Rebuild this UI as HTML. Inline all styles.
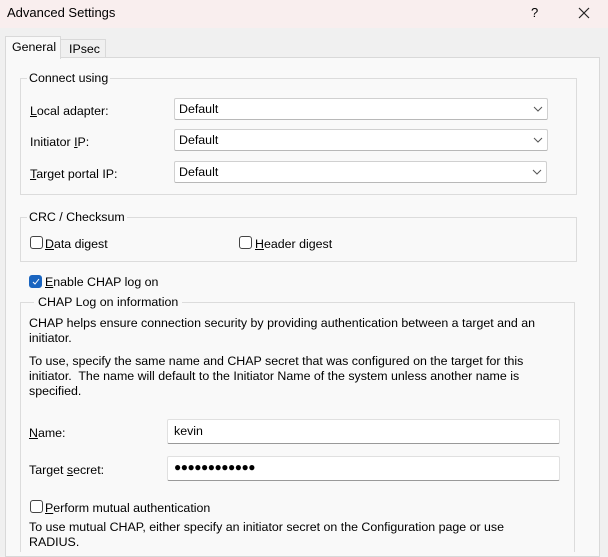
<!DOCTYPE html>
<html style="overflow:hidden;width:608px;height:557px"><head><style>
*{margin:0;padding:0;box-sizing:border-box}
body{width:608px;height:557px;background:#f0f0f0;font-family:"Liberation Sans",sans-serif;font-size:12.4px;color:#000;position:relative;overflow:hidden}
.a{position:absolute;white-space:nowrap}
.title{left:0;top:0;width:608px;height:28px;background:#f9eeee}
.grp{position:absolute;border:1px solid #dcdcdc}
.lg{position:absolute;background:#f9f9f9;padding:0 2px}
.combo{position:absolute;left:174px;width:374px;height:22px;background:#fff;border:1px solid #d0d0d0;border-bottom-color:#b8b8b8;border-radius:2px;padding:3px 0 0 4px}
.combo svg{position:absolute;right:4px;top:7px}
.cb{position:absolute;width:13px;height:13px;border:1px solid #444;border-radius:3px;background:#fff}
.inp{position:absolute;left:167px;width:393px;height:25px;background:#fff;border:1px solid #e0e0e0;border-bottom-color:#999;border-radius:2px;padding:4px 0 0 6px}
u{text-decoration:underline}
</style></head><body>
<div class="a title"></div>
<div class="a" style="left:7px;top:5px;font-size:13px">Advanced Settings</div>
<div class="a" style="left:531px;top:5px;font-size:13px">?</div>
<svg class="a" style="left:578px;top:7px" width="12" height="12"><path d="M1 1L11 11M11 1L1 11" stroke="#222" stroke-width="1.2"/></svg>
<div class="a" style="left:5px;top:57px;width:595px;height:500px;background:#f9f9f9;border:1px solid #d9d9d9"></div>
<div class="a" style="left:5px;top:36px;width:56px;height:23px;background:#f9f9f9;border:1px solid #d9d9d9;border-bottom:none"></div>
<div class="a" style="left:12px;top:40px">General</div>
<div class="a" style="left:61px;top:39px;width:45px;height:18px;background:#f0f0f0;border:1px solid #d9d9d9;border-left:none;border-bottom:none"></div>
<div class="a" style="left:69px;top:42px">IPsec</div>

<div class="grp" style="left:20px;top:78px;width:557px;height:117px"></div>
<div class="lg" style="left:27px;top:71px">Connect using</div>
<div class="a" style="left:30px;top:104px"><u>L</u>ocal adapter:</div>
<div class="a" style="left:30px;top:135px">Initiator <u>I</u>P:</div>
<div class="a" style="left:30px;top:167px"><u>T</u>arget portal IP:</div>
<div class="combo" style="top:98px">Default<svg width="10" height="6"><path d="M1 1L5 5L9 1" fill="none" stroke="#555"/></svg></div>
<div class="combo" style="top:129px">Default<svg width="10" height="6"><path d="M1 1L5 5L9 1" fill="none" stroke="#555"/></svg></div>
<div class="combo" style="top:161px;width:373px">Default<svg width="10" height="6"><path d="M1 1L5 5L9 1" fill="none" stroke="#555"/></svg></div>

<div class="grp" style="left:20px;top:217px;width:557px;height:45px"></div>
<div class="lg" style="left:27px;top:210px">CRC / Checksum</div>
<div class="cb" style="left:30px;top:236px"></div>
<div class="a" style="left:45px;top:237px"><u>D</u>ata digest</div>
<div class="cb" style="left:239px;top:236px"></div>
<div class="a" style="left:255px;top:237px"><u>H</u>eader digest</div>

<div class="cb" style="left:29px;top:275px;background:#1a65c0;border-color:#1a65c0"><svg width="11" height="11" style="position:absolute;left:0;top:0"><path d="M3 6L5 8L9 3" fill="none" stroke="#fff" stroke-width="1"/></svg></div>
<div class="a" style="left:45px;top:275px"><u>E</u>nable CHAP log on</div>

<div class="grp" style="left:20px;top:302px;width:555px;height:250px;border-bottom:none"></div>
<div class="lg" style="left:34px;top:295px;padding:0 4px">CHAP Log on information</div>
<div class="a" style="left:29px;top:316px;line-height:15px">CHAP helps ensure connection security by providing authentication between a target and an<br>initiator.</div>
<div class="a" style="left:29px;top:354px;line-height:15px">To use, specify the same name and CHAP secret that was configured on the target for this<br>initiator.&nbsp; The name will default to the Initiator Name of the system unless another name is<br>specified.</div>
<div class="a" style="left:29px;top:426px"><u>N</u>ame:</div>
<div class="inp" style="top:419px">kevin</div>
<div class="a" style="left:29px;top:463px">Target <u>s</u>ecret:</div>
<div class="inp" style="top:456px;font-size:12px;letter-spacing:-0.5px;padding-top:3px">●●●●●●●●●●●●</div>
<div class="cb" style="left:30px;top:500px"></div>
<div class="a" style="left:45px;top:501px"><u>P</u>erform mutual authentication</div>
<div class="a" style="left:29px;top:520px;line-height:15px">To use mutual CHAP, either specify an initiator secret on the Configuration page or use<br>RADIUS.</div>
</body></html>
